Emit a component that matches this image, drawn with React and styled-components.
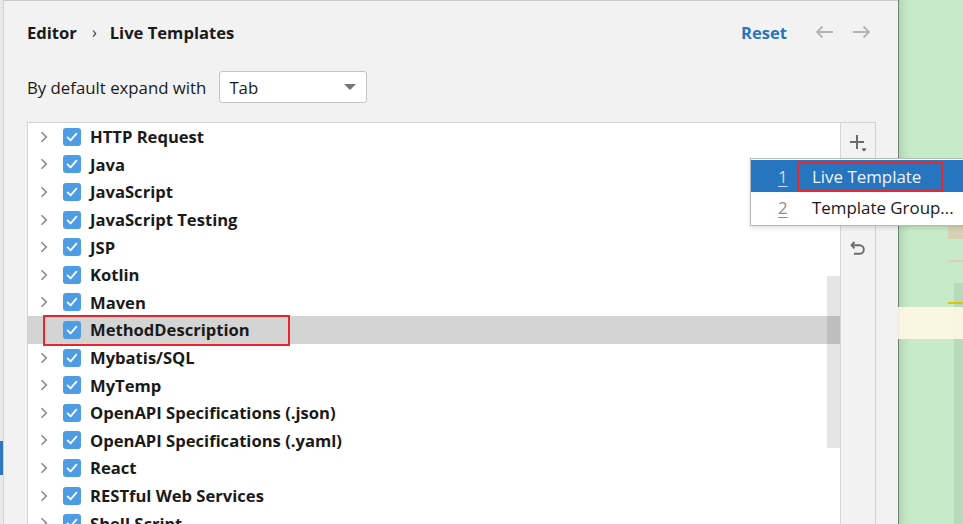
import React from "react"
import styled, { createGlobalStyle } from "styled-components"

const GlobalStyle = createGlobalStyle`
    html, body {
        margin: 0;
        padding: 0;
        background: #f2f2f2;
    }
    * {
        box-sizing: border-box;
    }
`

const FONT = `"Open Sans", "Noto Sans", "Liberation Sans", sans-serif`

const Screen = styled.div`
    position: relative;
    width: 963px;
    height: 524px;
    display: flex;
    overflow: hidden;
    font-family: ${FONT};
    color: #1a1a1a;
`
const LeftEdge = styled.div`
    width: 4px;
    flex-shrink: 0;
    background: #e8e8e8;
    border-right: 1px solid #d4d4d4;
`
const SideMarker = styled.div`
    width: 3px;
    height: 34px;
    margin-top: 441px;
    background: #2f76c2;
`
const Main = styled.main`
    width: 894px;
    height: 524px;
    flex-shrink: 0;
    display: flex;
    flex-direction: column;
    padding-left: 23px;
    border-top: 1px solid #cbcbcb;
    background: #f2f2f2;
    overflow: hidden;
`
const Header = styled.div`
    height: 62px;
    flex-shrink: 0;
    display: flex;
    align-items: center;
    padding-right: 27px;
`
const Crumb = styled.span`
    font-weight: 700;
    font-size: 16.6px;
`
const CrumbSep = styled.span`
    margin: 0 13px 0 15px;
    font-size: 16px;
    color: #333;
`
const Spacer = styled.div`
    flex: 1;
`
const ResetLink = styled.span`
    font-weight: 700;
    font-size: 16.6px;
    color: #2a73bf;
    margin-right: 28px;
`
const NavArrow = styled.svg`
    width: 19px;
    height: 14px;
    margin-left: ${p => p.$gap || 0}px;
`
const ExpandRow = styled.div`
    margin-top: 8px;
    flex-shrink: 0;
    display: flex;
    align-items: center;
    gap: 13px;
    font-size: 16.8px;
`
const Combo = styled.div`
    width: 148px;
    height: 32px;
    display: flex;
    align-items: center;
    justify-content: space-between;
    padding: 0 10px 0 9px;
    background: #fff;
    border: 1px solid #c4c4c4;
    border-radius: 3px;
`
const ComboArrow = styled.span`
    width: 0;
    height: 0;
    border-left: 6px solid transparent;
    border-right: 6px solid transparent;
    border-top: 6px solid #767676;
`
const TreeBox = styled.div`
    margin-top: 19px;
    margin-right: 22px;
    flex: 1;
    min-height: 0;
    display: flex;
    border: 1px solid #d2d2d2;
    border-bottom: none;
`
const List = styled.div`
    position: relative;
    flex: 1;
    background: #fff;
    overflow: hidden;
`
const Row = styled.div`
    position: relative;
    height: 27.6px;
    display: flex;
    align-items: center;
    padding-left: 12px;
    background: ${p => (p.$selected ? "#d4d4d4" : "transparent")};
`
const Marked = styled.span`
    position: absolute;
    left: 15px;
    top: -1px;
    width: 247px;
    height: 31px;
    border: 2px solid #e8262e;
    pointer-events: none;
`
const ChevronSlot = styled.span`
    width: 23px;
    display: flex;
    align-items: center;
`
const Check = styled.span`
    width: 18px;
    height: 18px;
    border-radius: 3px;
    background: #4e9de4;
    display: flex;
    align-items: center;
    justify-content: center;
    margin-right: 9px;
`
const RowLabel = styled.span`
    font-weight: 700;
    font-size: 16.6px;
    white-space: nowrap;
`
const ScrollThumb = styled.div`
    position: absolute;
    right: 0;
    top: 153px;
    width: 13px;
    height: 172px;
    background: rgba(0, 0, 0, 0.1);
`
const ToolBar = styled.div`
    width: 35px;
    flex-shrink: 0;
    border-left: 1px solid #d6d6d6;
    background: #f2f2f2;
    display: flex;
    flex-direction: column;
    align-items: center;
    padding-top: 7px;
    gap: 9px;
`
const ToolButton = styled.div`
    width: 26px;
    height: 26px;
    display: flex;
    align-items: center;
    justify-content: center;
`
const GreenPane = styled.div`
    position: relative;
    flex: 1;
    background: linear-gradient(90deg, #6f7f70 0, #6f7f70 1px, #b2d6b4 1px, #c2e6c4 8px, #c7ebc9 14px);
`
const Stripe = styled.div`
    position: absolute;
    left: ${p => p.$x}px;
    top: ${p => p.$y}px;
    right: 0;
    height: ${p => p.$h}px;
    background: ${p => p.$c};
`
const DarkColumn = styled.div`
    position: absolute;
    left: 56px;
    top: 283px;
    right: 0;
    bottom: 0;
    background: rgba(0, 40, 10, 0.08);
`
const Popup = styled.div`
    position: absolute;
    left: 750px;
    top: 158px;
    width: 230px;
    padding: 1px 0 3px;
    background: #fff;
    border: 1px solid #b8b8b8;
    box-shadow: 0 2px 4px rgba(0, 0, 0, 0.12);
`
const MenuItem = styled.div`
    position: relative;
    height: ${p => (p.$active ? 32 : 30)}px;
    display: flex;
    align-items: center;
    font-size: 16.9px;
    white-space: nowrap;
    background: ${p => (p.$active ? "#2675bf" : "transparent")};
    color: ${p => (p.$active ? "#eef3fa" : "#1a1a1a")};
`
const Mnemonic = styled.span`
    display: inline-block;
    flex-shrink: 0;
    width: 61px;
    padding-left: 27px;
    color: ${p => (p.$active ? "#c9d9ee" : "#8a8a8a")};
    & > u {
        text-underline-offset: 3px;
    }
`
const MenuMark = styled.span`
    position: absolute;
    left: 46px;
    top: 2px;
    width: 146px;
    height: 30px;
    border: 2px solid #e8262e;
`

const Chevron = () => (
    <svg width="8" height="12" viewBox="0 0 8 12">
        <path d="M1.5 1.2 L6.3 6 L1.5 10.8" fill="none" stroke="#8a8a8a" strokeWidth="1.6" />
    </svg>
)

const Tick = () => (
    <svg width="14" height="14" viewBox="0 0 14 14">
        <path d="M2.6 7.4 L5.6 10.3 L11.4 3.6" fill="none" stroke="#fff" strokeWidth="1.8" strokeLinecap="round" strokeLinejoin="round" />
    </svg>
)

const groups = [
    "HTTP Request",
    "Java",
    "JavaScript",
    "JavaScript Testing",
    "JSP",
    "Kotlin",
    "Maven",
    "MethodDescription",
    "Mybatis/SQL",
    "MyTemp",
    "OpenAPI Specifications (.json)",
    "OpenAPI Specifications (.yaml)",
    "React",
    "RESTful Web Services",
    "Shell Script",
]

export default function App() {
    return (
        <Screen>
            <GlobalStyle />
            <LeftEdge>
                <SideMarker />
            </LeftEdge>
            <Main>
                <Header>
                    <Crumb>Editor</Crumb>
                    <CrumbSep>›</CrumbSep>
                    <Crumb>Live Templates</Crumb>
                    <Spacer />
                    <ResetLink>Reset</ResetLink>
                    <NavArrow viewBox="0 0 19 14">
                        <path d="M18 7 H2 M7.5 1.5 L2 7 L7.5 12.5" fill="none" stroke="#b4b4b4" strokeWidth="1.8" />
                    </NavArrow>
                    <NavArrow viewBox="0 0 19 14" $gap={18}>
                        <path d="M1 7 H17 M11.5 1.5 L17 7 L11.5 12.5" fill="none" stroke="#b4b4b4" strokeWidth="1.8" />
                    </NavArrow>
                </Header>
                <ExpandRow>
                    <span>By default expand with</span>
                    <Combo>
                        <span>Tab</span>
                        <ComboArrow />
                    </Combo>
                </ExpandRow>
                <TreeBox>
                    <List>
                        {groups.map(name => {
                            const selected = name === "MethodDescription"
                            return (
                                <Row key={name} $selected={selected}>
                                    <ChevronSlot>{!selected && <Chevron />}</ChevronSlot>
                                    <Check>
                                        <Tick />
                                    </Check>
                                    <RowLabel>{name}</RowLabel>
                                    {selected && <Marked />}
                                </Row>
                            )
                        })}
                        <ScrollThumb />
                    </List>
                    <ToolBar>
                        <ToolButton>
                            <svg width="20" height="20" viewBox="0 0 20 20">
                                <path d="M9 2 V16 M2 9 H16" stroke="#6b6b6b" strokeWidth="2" />
                                <path d="M13.5 15.5 H18.5 L16 18.5 Z" fill="#4a4a4a" />
                            </svg>
                        </ToolButton>
                        <ToolButton>
                            <svg width="18" height="18" viewBox="0 0 18 18">
                                <path d="M2 9 H16" stroke="#6b6b6b" strokeWidth="2" />
                            </svg>
                        </ToolButton>
                        <ToolButton>
                            <svg width="18" height="18" viewBox="0 0 18 18">
                                <rect x="5" y="5" width="10" height="11" fill="none" stroke="#6b6b6b" strokeWidth="1.5" />
                            </svg>
                        </ToolButton>
                        <ToolButton>
                            <svg width="18" height="18" viewBox="0 0 18 18">
                                <path d="M5.5 3 L2.5 6.2 L5.5 9.4" fill="none" stroke="#6b6b6b" strokeWidth="1.9" strokeLinejoin="round" />
                                <path d="M3 6.2 H10.5 A4.3 4.3 0 0 1 10.5 14.8 H5" fill="none" stroke="#6b6b6b" strokeWidth="1.9" />
                            </svg>
                        </ToolButton>
                    </ToolBar>
                </TreeBox>
            </Main>
            <GreenPane>
                <Stripe $x={50} $y={226} $h={13} $c="#d8d1b1" />
                <Stripe $x={50} $y={260} $h={2} $c="#e2cdb0" />
                <DarkColumn />
                <Stripe $x={50} $y={302} $h={2} $c="#e3c400" />
                <Stripe $x={0} $y={307} $h={32} $c="rgba(255, 247, 228, 0.9)" />
            </GreenPane>
            <Popup>
                <MenuItem $active>
                    <Mnemonic $active><u>1</u></Mnemonic>
                    <span>Live Template</span>
                    <MenuMark />
                </MenuItem>
                <MenuItem>
                    <Mnemonic><u>2</u></Mnemonic>
                    <span>Template Group...</span>
                </MenuItem>
            </Popup>
        </Screen>
    )
}
